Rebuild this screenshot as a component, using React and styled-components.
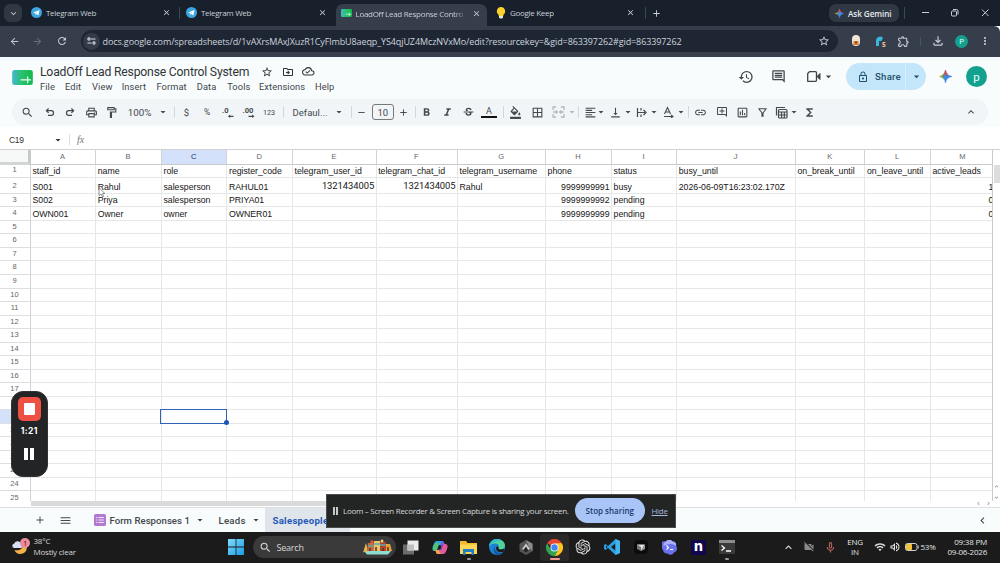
import styled, { createGlobalStyle } from "styled-components";
import {
  MdStarBorder, MdOutlineDriveFileMove, MdOutlineCloudDone, MdHistory, MdOutlineComment,
  MdLockOutline, MdArrowDropDown, MdSearch, MdOutlinePrint,
  MdOutlineFormatPaint, MdFormatBold, MdFormatItalic, MdStrikethroughS, MdFormatColorFill,
  MdBorderAll, MdFormatAlignLeft, MdVerticalAlignBottom, MdLink, MdOutlineAddComment,
  MdOutlineInsertChart, MdOutlineFilterAlt, MdFunctions, MdKeyboardArrowUp, MdKeyboardArrowLeft,
  MdKeyboardArrowDown, MdAdd, MdRemove, MdMenu, MdArrowBack, MdArrowForward, MdRefresh, MdClose,
  MdOutlineExtension, MdOutlineFileDownload, MdMoreVert, MdVideocamOff, MdOutlineMicNone,
  MdWifi, MdOutlineVolumeUp,
} from "react-icons/md";
import { RiOpenaiFill } from "react-icons/ri";

const GlobalStyle = createGlobalStyle`
  * { box-sizing: border-box; }
  body { margin: 0; overflow: hidden; }
  svg { display: block; flex: none; }
`;

const ui = `"Open Sans", "Noto Sans", sans-serif`;
const google = `Roboto, "Noto Sans", sans-serif`;

const Screen = styled.div`
  width: 1000px;
  height: 563px;
  display: flex;
  flex-direction: column;
  position: relative;
  overflow: hidden;
  white-space: nowrap;
  background: #fff;
`;

/* ---------- browser ---------- */

const TabStrip = styled.div`
  flex: none;
  height: 26px;
  background: #17202b;
  display: flex;
  align-items: center;
  padding-left: 4px;
  color: #c9cfd7;
  font: 8px ${ui};
  letter-spacing: -0.3px;
`;
const TabSearch = styled.div`
  width: 18px;
  height: 18px;
  border-radius: 6px;
  background: #303844;
  display: flex;
  align-items: center;
  justify-content: center;
`;
const Tab = styled.div`
  width: ${({ $w }) => $w}px;
  height: ${({ $active }) => ($active ? 22 : 20)}px;
  align-self: ${({ $active }) => ($active ? "flex-end" : "center")};
  display: flex;
  align-items: center;
  padding: 0 6px ${({ $active }) => ($active ? 4 : 1)}px ${({ $active }) => ($active ? 5 : 8)}px;
  gap: 4px;
  margin-left: ${({ $ml }) => $ml || 0}px;
  background: ${({ $active }) => ($active ? "#363e4b" : "transparent")};
  border-radius: 7px 7px 0 0;
`;
const TabTitle = styled.span`
  flex: 1;
  ${({ $fade }) => $fade && "-webkit-mask-image: linear-gradient(90deg, #000 88%, transparent);"}
`;
const Separator = styled.span`
  flex: none;
  width: 1px;
  height: ${({ $h }) => $h || 12}px;
  margin-left: ${({ $ml }) => $ml || 0}px;
  background: ${({ $color }) => $color || "#3d4653"};
`;
const Gemini = styled.div`
  margin-left: auto;
  width: 70px;
  height: 18px;
  border-radius: 7px;
  background: #303843;
  display: flex;
  align-items: center;
  padding-left: 6px;
  gap: 4px;
  color: #e6e9ee;
  font-weight: 600;
  font-size: 8.2px;
  letter-spacing: -0.1px;
`;
const AddressRow = styled.div`
  flex: none;
  height: 31px;
  background: #363e4b;
  border-top-right-radius: 6px;
  display: flex;
  align-items: center;
  padding-left: 8px;
  padding-bottom: 1px;
  color: #c6ccd5;
`;
const Omnibox = styled.div`
  width: 757px;
  height: 22px;
  margin-left: 13px;
  border-radius: 11px;
  background: #1e2633;
  display: flex;
  align-items: center;
  padding: 0 8px 0 2px;
  font: 9px ${ui};
  letter-spacing: -0.106px;
  color: #ccd3dc;
`;
const SiteInfo = styled.span`
  width: 17px;
  height: 17px;
  border-radius: 50%;
  background: #343c49;
  display: flex;
  align-items: center;
  justify-content: center;
  margin-right: 3px;
`;
const Url = styled.span`
  flex: 1;
`;
const Avatar = styled.span`
  flex: none;
  width: ${({ $size }) => $size}px;
  height: ${({ $size }) => $size}px;
  margin-left: ${({ $ml }) => $ml}px;
  border-radius: 50%;
  background: #13a18f;
  color: #e8fffb;
  display: flex;
  align-items: center;
  justify-content: center;
  font: ${({ $font }) => $font}px ${google};
`;

/* ---------- sheets header ---------- */

const Header = styled.div`
  flex: none;
  height: 41px;
  background: linear-gradient(#eff8fd 0, #f9fcfc 5px);
  display: flex;
  padding-left: 12px;
  font-family: ${google};
  color: #40464b;
`;
const TitleBlock = styled.div`
  margin-left: 7px;
  padding-top: 6px;
`;
const TitleRow = styled.div`
  display: flex;
  align-items: center;
  height: 17px;
  font-size: 12.2px;
  letter-spacing: -0.19px;
  color: #303438;
`;
const TitleText = styled.span`
  width: 221px;
`;
const MenuRow = styled.div`
  display: flex;
  height: 13px;
  align-items: center;
  font-size: 9.3px;
  letter-spacing: 0.1px;
`;
const MenuItem = styled.span`
  width: ${({ $w }) => $w}px;
`;
const HeaderActions = styled.div`
  margin-left: auto;
  display: flex;
  align-items: center;
  height: 39px;
  padding-right: 13px;
  color: #3f4549;
`;
const ShareButton = styled.div`
  width: 80px;
  height: 27px;
  border-radius: 14px;
  background: #c3e6fa;
  display: flex;
  align-items: center;
  padding-left: 11px;
  margin-left: 13px;
  color: #23506b;
  font-size: 9.6px;
  font-weight: 500;
  letter-spacing: 0.25px;
`;
const ShareText = styled.span`
  width: 30px;
  margin-left: 6px;
`;
const ShareSplit = styled.span`
  width: 21px;
  height: 27px;
  border-left: 1px solid #d9effb;
  display: flex;
  align-items: center;
  justify-content: center;
`;

const ToolbarWrap = styled.div`
  flex: none;
  height: 29px;
  background: #f9fcfc;
  padding: 1px 12px 0;
`;
const Toolbar = styled.div`
  height: 26px;
  border-radius: 13px;
  background: #f1f5f7;
  display: flex;
  align-items: center;
  color: #45494d;
  font: 9.5px ${google};
`;
const Tool = styled.span`
  flex: none;
  width: ${({ $w }) => $w || 16}px;
  margin-left: ${({ $ml }) => $ml || 0}px;
  display: flex;
  align-items: center;
  justify-content: center;
  opacity: ${({ $dim }) => ($dim ? 0.35 : 1)};
  font-size: ${({ $fs }) => $fs || 9.5}px;
`;
const FontSizeBox = styled.span`
  width: 21.5px;
  height: 16px;
  margin-left: 5px;
  border: 1px solid #75797c;
  border-radius: 3px;
  display: flex;
  align-items: center;
  justify-content: center;
`;
const ColorTool = styled(Tool)`
  flex-direction: column;
  font-size: 9px;
  line-height: 9px;
  padding-top: 1px;
  border-bottom: 2.5px solid #111;
`;
const FormulaBar = styled.div`
  flex: none;
  height: 21.5px;
  display: flex;
  align-items: center;
  padding: 4px 0 0 9px;
  font: 8.5px "Liberation Sans", Arial, sans-serif;
  color: #333;
`;
const NameBox = styled.span`
  width: 44px;
  letter-spacing: -0.35px;
`;
const Fx = styled.i`
  margin-left: 7px;
  font: italic 10px "Liberation Serif", serif;
  color: #777;
`;

/* ---------- grid ---------- */

const GridArea = styled.div`
  flex: none;
  height: 352.3px;
  display: flex;
  overflow: hidden;
`;
const Grid = styled.div`
  width: 993px;
  overflow: hidden;
  border-right: 1px solid #c9cbcc;
  display: grid;
  grid-template-columns: 31px 65.2px 65.8px 65.5px 65.6px 83.6px 81.4px 88px 66px 65.2px 118.7px 69.5px 65.5px 65px;
  grid-template-rows: 16.2px 13.3px 15.8px repeat(23, 13.54px);
  align-content: start;
  font: 8.75px "Liberation Sans", Arial, sans-serif;
  letter-spacing: -0.02px;
  color: #161616;
`;
const Corner = styled.div`
  background: #f7f8f8;
  border-top: 1px solid #d0d2d3;
  border-right: 3px solid #c6c8c9;
  border-bottom: 3px solid #d2d4d5;
`;
const ColumnHead = styled.div`
  border-top: 1px solid #d0d2d3;
  border-right: 1px solid #d0d2d3;
  border-bottom: 1px solid #c8cacb;
  display: flex;
  align-items: center;
  justify-content: center;
  padding-right: 1px;
  font-size: 7.5px;
  color: ${({ $on }) => ($on ? "#10306b" : "#666")};
  background: ${({ $on }) => ($on ? "#d3e1fb" : "#fff")};
`;
const RowHead = styled.div`
  border-right: 1px solid #d0d2d3;
  border-bottom: 1px solid #dcdedf;
  display: flex;
  align-items: flex-end;
  justify-content: center;
  padding: 0 1px 2.5px 0;
  line-height: 9px;
  font-size: 7.5px;
  color: #666;
  background: ${({ $on }) => ($on ? "#d3e1fb" : "#fff")};
`;
const Cell = styled.div`
  min-width: 0;
  position: relative;
  z-index: ${({ $on }) => ($on ? 1 : 0)};
  border-right: 1px solid #e6e8e8;
  border-bottom: 1px solid #e6e8e8;
  display: flex;
  align-items: flex-end;
  justify-content: ${({ $right }) => ($right ? "flex-end" : "flex-start")};
  padding: 0 1.5px 0.9px 1.5px;
  line-height: 10px;
  ${({ $big }) => $big && `font: 9.4px/13px ${google}; letter-spacing: -0.04px; padding-bottom: 0.5px;`}
`;
const Selection = styled.div`
  position: absolute;
  inset: -1px -1px -1px -1.5px;
  border: 1px solid #2d62b5;

  &::after {
    content: "";
    position: absolute;
    right: -3px;
    bottom: -2.5px;
    width: 5px;
    height: 5px;
    border-radius: 50%;
    background: #1c56b3;
  }
`;
const VScroll = styled.div`
  flex: 1;
  display: flex;
  flex-direction: column;
  align-items: center;
  justify-content: space-between;
  padding: 15.5px 0 0;
  border-top: 1px solid #d0d2d3;
  color: #888;
`;
const VThumb = styled.div`
  width: 6px;
  height: 18px;
  background: #dcdddd;
`;
const ScrollArrows = styled.div`
  display: flex;
  flex-direction: ${({ $row }) => ($row ? "row" : "column")};
  gap: 3.5px;
`;
const HScroll = styled.div`
  flex: none;
  height: 7.2px;
  border-bottom: 1px solid #dcdedf;
  display: flex;
  align-items: center;
  justify-content: space-between;
  padding: 0 8px 0 31px;
  color: #888;
`;
const HThumb = styled.div`
  width: 590px;
  height: 5px;
  background: #d9dbdb;
`;

const SheetTabs = styled.div`
  flex: none;
  height: 24px;
  background: #f9fcfc;
  display: flex;
  align-items: center;
  padding: 1px 11px 0 33px;
  font: 500 9.6px ${google};
  color: #42474b;
`;
const SheetTab = styled.span`
  width: ${({ $w }) => $w}px;
  margin-left: ${({ $ml }) => $ml}px;
  letter-spacing: ${({ $ls }) => $ls}px;
`;
const ActiveSheet = styled.span`
  width: 85px;
  height: 24px;
  margin: -1px 0 0 4.5px;
  padding: 1px 0 0 7.5px;
  background: #dfe5ea;
  color: #2558b8;
  font-weight: 700;
  letter-spacing: 0.28px;
  display: flex;
  align-items: center;
`;

/* ---------- taskbar ---------- */

const Taskbar = styled.div`
  flex: none;
  height: 31px;
  background: #1b1b1b;
  display: flex;
  align-items: center;
  padding-left: 12px;
  font: 8px ${ui};
  letter-spacing: -0.22px;
  color: #e4e4e4;
`;
const Weather = styled.div`
  width: 194.5px;
  margin-left: 3.5px;
  line-height: 10.5px;
  color: #d6d6d6;
  padding-bottom: 1px;
`;
const SearchPill = styled.div`
  width: 143px;
  height: 22px;
  border-radius: 11px;
  background: #3a3a3a;
  margin: 0 0 0 8.5px;
  display: flex;
  align-items: center;
  padding: 0 3px 0 6px;
  font-size: 9px;
  color: #d5d5d5;
`;
const SearchText = styled.span`
  flex: 1;
  margin-left: 5px;
`;
const TaskApp = styled.span`
  flex: none;
  width: 28.7px;
  height: 27px;
  display: flex;
  align-items: center;
  justify-content: center;
  position: relative;
  border-radius: 3px;
  background: ${({ $on }) => ($on ? "#2a2828" : "transparent")};

  &::after {
    content: "";
    display: ${({ $mark }) => ($mark ? "block" : "none")};
    position: absolute;
    bottom: 1px;
    width: ${({ $on }) => ($on ? 10 : 4)}px;
    height: 2px;
    border-radius: 1px;
    background: ${({ $on }) => ($on ? "#f0988c" : "#9a9a9a")};
  }
`;
const NLogo = styled.span`
  width: 15px;
  height: 15px;
  background: #12064f;
  color: #fff;
  font: 800 14px/12px Inter, sans-serif;
  text-align: center;
`;
const Tray = styled.div`
  margin-left: auto;
  display: flex;
  align-items: center;
  padding-right: 13px;
`;
const TrayText = styled.span`
  width: ${({ $w }) => $w}px;
  margin-left: ${({ $ml }) => $ml || 0}px;
  text-align: ${({ $align }) => $align || "center"};
  line-height: 10.5px;
`;

/* ---------- overlays ---------- */

const Recorder = styled.div`
  position: absolute;
  left: 10.5px;
  top: 391px;
  width: 37.5px;
  height: 86px;
  border-radius: 12px;
  background: #232425;
  border: 1px solid #333;
  display: flex;
  flex-direction: column;
  align-items: center;
  padding-top: 5px;
  color: #fff;
  font: 700 8.5px/10px Inter, sans-serif;
  letter-spacing: 0.4px;
`;
const StopSquare = styled.div`
  width: 23.5px;
  height: 23.5px;
  border-radius: 5px;
  background: #ee5144;
  display: flex;
  align-items: center;
  justify-content: center;

  &::after {
    content: "";
    width: 11.5px;
    height: 12px;
    border-radius: 1px;
    background: #fff;
  }
`;
const Elapsed = styled.span`
  margin: 5px 0 12.5px;
`;
const Bars = styled.span`
  width: ${({ $w }) => $w}px;
  height: ${({ $h }) => $h}px;
  border: solid ${({ $color }) => $color || "#fff"};
  border-width: 0 ${({ $bar }) => $bar}px;
`;
const ShareNotice = styled.div`
  position: absolute;
  left: 326px;
  top: 494px;
  width: 350px;
  height: 33.5px;
  background: #232525;
  border: 1px solid #4a4c4c;
  display: flex;
  align-items: center;
  padding-left: 6px;
  color: #d6d9d9;
  font: 8px ${ui};
  letter-spacing: -0.29px;
`;
const NoticeText = styled.span`
  width: 232px;
  margin-left: 5px;
`;
const StopSharing = styled.span`
  width: 69.5px;
  height: 25px;
  border-radius: 13px;
  background: #a9c5f8;
  color: #17386e;
  font-weight: 600;
  letter-spacing: 0;
  display: flex;
  align-items: center;
  justify-content: center;
`;
const Hide = styled.span`
  margin-left: 7px;
  color: #a3b8dc;
  text-decoration: underline;
`;
const Pointer = styled.svg`
  position: absolute;
  left: 98px;
  top: 187px;
`;

/* ---------- drawings ---------- */

const Telegram = () => (
  <svg width="11" height="11" viewBox="0 0 22 22">
    <circle cx="11" cy="11" r="11" fill="#3da5e0" />
    <path d="M4.5 10.8 17 5.8l-2.2 11-3.9-2.9-2 1.9-.4-3.2z" fill="#fff" />
    <path d="m8.6 12.6 5.6-4.1-4.2 5z" fill="#a9d2ee" />
  </svg>
);

const SheetLogo = ({ w, h }) => (
  <svg width={w} height={h} viewBox="0 0 44 32">
    <defs>
      <linearGradient id="sheet">
        <stop offset="0" stopColor="#43b7cf" />
        <stop offset=".5" stopColor="#27c268" />
        <stop offset="1" stopColor="#14b84f" />
      </linearGradient>
    </defs>
    <rect width="44" height="32" rx="5" fill="url(#sheet)" />
    <path d="M18 21h22M33 14v14" stroke="#eafff2" strokeWidth="2.6" />
  </svg>
);

const Bulb = () => (
  <svg width="10" height="12" viewBox="0 0 10 12">
    <path d="M5 0a4.2 4.2 0 0 0-2.4 7.6V9h4.8V7.6A4.2 4.2 0 0 0 5 0z" fill="#fbd22d" />
    <path d="M3 9h4v1.5L6 11.5H4l-1-1z" fill="#e8e3cf" />
  </svg>
);

const Spark = ({ size }) => (
  <svg width={size} height={size} viewBox="0 0 24 24">
    <defs>
      <linearGradient id="sp1" x1="0" y1=".5" x2="1" y2=".5">
        <stop offset="0" stopColor="#f4b92c" />
        <stop offset=".32" stopColor="#42a565" />
        <stop offset=".5" stopColor="#4285f4" />
        <stop offset="1" stopColor="#3a7df0" />
      </linearGradient>
      <linearGradient id="sp2" x1="0" y1="0" x2="0" y2="1">
        <stop offset="0" stopColor="#ea4335" />
        <stop offset=".2" stopColor="#ea4335" />
        <stop offset=".5" stopColor="#ea4335" stopOpacity="0" />
      </linearGradient>
    </defs>
    <path d="M12 0c1 7 5 11 12 12-7 1-11 5-12 12-1-7-5-11-12-12C7 11 11 7 12 0z" fill="url(#sp1)" stroke="url(#sp1)" />
    <path d="M12 0c1 7 5 11 12 12-7 1-11 5-12 12-1-7-5-11-12-12C7 11 11 7 12 0z" fill="url(#sp2)" stroke="url(#sp2)" />
  </svg>
);

const WindowButtons = () => (
  <svg width="70" height="10" viewBox="0 0 70 10" fill="none" stroke="#c9cfd7" strokeWidth="1">
    <path d="M1 4.5h7M61 1.5l6.5 6.5M67.5 1.5 61 8" />
    <rect x="30.5" y="3" width="5" height="5" rx="1" />
    <path d="M32 1.5h3.5a1.5 1.5 0 0 1 1.5 1.5v3.5" />
  </svg>
);

const Tune = () => (
  <svg width="9" height="8" viewBox="0 0 18 16" fill="none" stroke="#d5dbe3" strokeWidth="2.2">
    <path d="M8 4h9M1 12h8" />
    <circle cx="4" cy="4" r="2.2" />
    <circle cx="14" cy="12" r="2.2" />
  </svg>
);

const Turn = ({ flip }) => (
  <svg width="10" height="10" viewBox="0 0 10 10" fill="none" stroke="#45494d" strokeWidth="1.2">
    <path
      d="M3.600 1.500 1.400 3.700l2.200 2.200M1.600 3.700h4.600a2.300 2.300 0 0 1 0 4.700H3"
      transform={flip ? "matrix(-1 0 0 1 10 0)" : undefined}
    />
  </svg>
);

const Camera = () => (
  <svg width="15" height="13" viewBox="0 0 15 13">
    <path d="M3.500 1.700h6a1 1 0 0 1 1 1v7.600a1 1 0 0 1-1 1H1.700V3.500z" fill="none" stroke="#3f4549" strokeWidth="1.300" strokeLinejoin="round" />
    <path d="M11 6.500 14 3.500v6z" fill="#3f4549" stroke="#3f4549" />
  </svg>
);

const Decimal = ({ zeros, back }) => (
  <svg width="14" height="13" viewBox="0 0 14 13" fill="#45494d">
    <text x={back ? 0.5 : 1} y="7.2" fontSize="7.6" fontWeight="700" fontFamily="Roboto, sans-serif">{zeros}</text>
    <path d={back ? "M6.500 9.700h3.700V8.500l2.300 1.800-2.300 1.800v-1.200H6.500z" : "M12.500 9.700H9.200V8.500L6.900 10.300l2.300 1.800v-1.200h3.300z"} />
  </svg>
);

const Merge = () => (
  <svg width="13" height="12" viewBox="0 0 13 12" fill="none" stroke="#45494d" strokeWidth="1.3">
    <path d="M4 1H1v3M9 1h3v3M4 11H1V8M9 11h3V8M1 6h4M12 6H8M3.8 4.5 5.3 6 3.8 7.5M9.2 4.5 7.7 6l1.5 1.5" />
  </svg>
);

const Wrap = () => (
  <svg width="12" height="11" viewBox="0 0 12 11" fill="none" stroke="#45494d" strokeWidth="1.2">
    <path d="M1.5 1v9M5 1v2.5M5 7.5V10M2 5.5h7M7.5 3l2.6 2.5L7.5 8" />
  </svg>
);

const Rotate = () => (
  <svg width="12" height="12" viewBox="0 0 12 12" fill="none" stroke="#45494d" strokeWidth="1.1">
    <path d="M1.5 8 4.5 1.5 7.5 8M2.6 6h3.8M1 10.5h8.500M8 8.800l2 1.700-2 1.500" />
  </svg>
);

const TableTool = () => (
  <svg width="13" height="13" viewBox="0 0 13 13" fill="none" stroke="#45494d" strokeWidth="1.2">
    <path d="M1.5 9.5v-8h8.5" />
    <rect x="3.5" y="3.5" width="8.5" height="8.5" rx="1" />
    <path d="M3.5 6h8.5M3.5 9h8.5M6.5 6v6M9.3 6v6" />
  </svg>
);

const FormIcon = () => (
  <svg width="12" height="12" viewBox="0 0 12 12">
    <rect width="12" height="12" rx="1.5" fill="#b27ad3" />
    <path d="M2.2 3.5h1.2M2.2 6h1.2M2.2 8.5h1.2M4.5 3.5h5.3M4.5 6h5.3M4.5 8.5h5.3" stroke="#f5e6fb" strokeWidth="1.2" />
  </svg>
);

const WeatherIcon = () => (
  <svg width="18" height="18" viewBox="0 0 18 18">
    <path d="M12 3c5 4 3.500 13-3.500 13-3.500 0-5.500-2-6-4 5 1.500 10-2 9.500-9z" fill="#f3b146" />
    <path d="M2 10a2.300 2.300 0 0 1 .3-4.500A3.500 3.500 0 0 1 9 6a2 2 0 0 1 0 4z" fill="#d5e0f4" />
    <circle cx="13" cy="5" r="5" fill="#f08c9c" />
    <text x="13" y="7.8" textAnchor="middle" fontSize="7.5" fontFamily="Open Sans, sans-serif" fill="#3a1a20">1</text>
  </svg>
);

const Windows = () => (
  <svg width="16" height="16" viewBox="0 0 16 16">
    <defs>
      <linearGradient id="win" x1="0" y1="0" x2="1" y2="1">
        <stop offset="0" stopColor="#7fdcfb" />
        <stop offset="1" stopColor="#1c9ce6" />
      </linearGradient>
    </defs>
    <path d="M0 0h7.600v7.600H0zM8.400 0H16v7.600H8.400zM0 8.400h7.600V16H0zM8.400 8.400H16V16H8.400z" fill="url(#win)" />
  </svg>
);

const Market = () => (
  <svg width="31" height="18" viewBox="0 0 31 18">
    <path d="M2 13h27l-3 3.500H5z" fill="#8fdcd0" />
    <path d="M1 14.500 4 5l2 8z" fill="#e8b44c" />
    <path d="M6 5h6v8H5z" fill="#c9683f" />
    <path d="M12 3h6v10h-6z" fill="#e6c46e" />
    <path d="M18 4h6v9h-6z" fill="#b5442f" />
    <path d="M24 6h4l2 7h-6z" fill="#e3a23c" />
    <path d="M6 8h6M18 7h6M12 6h6" stroke="#57a9a8" strokeWidth="1.5" />
    <path d="M8 13v-3M14 13v-4M21 13v-3M26 13v-4" stroke="#5d2f22" strokeWidth="1.5" />
    <circle cx="10" cy="4" r="1.7" fill="#e05b3a" />
    <circle cx="20" cy="3" r="1.5" fill="#f0d27a" />
  </svg>
);

const TaskView = () => (
  <svg width="16" height="15" viewBox="0 0 16 15">
    <rect x="0" y="4.5" width="11" height="10" fill="#6c6c6c" />
    <rect x="4.5" y="0.5" width="11" height="10" fill="#ececec" />
    <rect x="4.5" y="4.5" width="6.5" height="6" fill="#bdbdbd" />
  </svg>
);

const Copilot = () => (
  <svg width="16" height="15" viewBox="0 0 16 15">
    <path d="M5 1h5c2 0 2 2 2.500 4H7L4.500 11H3C0 11 0 8.500 1 6s1.500-5 4-5z" fill="#2f9fe0" />
    <path d="M3 11c2 0 2-2 3-5 .6-2 1-3 3-3H5C3 3 1 6 1 8s0 3 2 3z" fill="#58c46a" />
    <path d="M11 14H6c-2 0-2-2-2.500-4H9l2.500-6H13c3 0 3 2.500 2 5s-1.500 5-4 5z" fill="#e25a98" />
    <path d="M10 1c2 0 2 3 3 3-2 0-2.500 2-3.200 4L9 10H6l2-5z" fill="#7d57dc" />
    <path d="M6 14c-2 0-2-2-2.500-4H7c0 2 1 4 3 4z" fill="#f2a64a" />
    <path d="M7 5.500h2.500L8.500 9.500H6z" fill="#1b1b1b" />
  </svg>
);

const Explorer = () => (
  <svg width="17" height="15" viewBox="0 0 17 15">
    <path d="M0 1h6l1.500 2H17v11H0z" fill="#f5b92f" />
    <path d="M0 4.500h17V14H0z" fill="#fcd656" />
    <path d="M3 9h11v6h-2.500v-3h-6v3H3z" fill="#1e7fc4" />
  </svg>
);

const Edge = () => (
  <svg width="16" height="16" viewBox="0 0 16 16">
    <circle cx="8" cy="8" r="8" fill="#1d82d2" />
    <path d="M0 7.500C.5 3 4 0 8 0c4.500 0 8 3 8 6.500C16 9 14 10.500 12 10.500c-2 0-3-.8-2.300-2C10.500 6 8.500 4.500 6 4.500c-2.500 0-5 1-6 3z" fill="#4fd39a" />
    <path d="M0 7.500C.5 3 4 0 8 0c2 0 3 .5 4 1.500C8 1 3 3 0 7.500z" fill="#2fb8d8" />
    <path d="M6.200 7c-1.500 3 1 7 5 7 1.500 0 2.500-.3 3.300-1C13 15 11 16 8 16 4.500 14.500 3.500 9.500 6.200 7z" fill="#125a9e" />
    <path d="M9.700 8.500c-.7 1.200.3 2 2.300 2 1 0 2-.3 2.800-1l.2 3c-3 1.500-8 .5-8-3 0-1 .6-2 1.500-2.200z" fill="#1b1b1b" />
  </svg>
);

const HexApp = () => (
  <svg width="14" height="15" viewBox="0 0 14 15">
    <path d="m7 0 6.500 3.800v7.400L7 15 .5 11.200V3.800z" fill="#555" />
    <path d="m7 0 6.500 3.800v7.400L10 7z" fill="#8b8b8b" />
    <path d="M7 3.500 11 9 7 11 3 9z" fill="#cfcfcf" />
    <path d="M7 6.500 9.500 10.500 7 12.500l-3-2z" fill="#262626" />
  </svg>
);

const Chrome = () => (
  <svg width="17" height="17" viewBox="0 0 48 48">
    <path d="M24 24 3.200 12A24 24 0 0 1 44.800 12z" fill="#e84436" />
    <path d="M24 12h20.800A24 24 0 0 1 24 48l10.400-18z" fill="#fbc51d" />
    <path d="M13.600 30 3.200 12A24 24 0 0 0 24 48l10.400-18z" fill="#2fa553" />
    <circle cx="24" cy="24" r="11.5" fill="#fff" />
    <circle cx="24" cy="24" r="9" fill="#4285f4" />
  </svg>
);

const VsCode = () => (
  <svg width="16" height="16" viewBox="0 0 32 32">
    <path d="M23 0 8 14 3 10 0 12v8l3 2 5-4 15 14 9-4V4zM4 19v-6l3 3zm19 4-9-7 9-7z" fill="#2a9bdc" fillRule="evenodd" />
    <path d="m23 0 9 4v24l-9 4z" fill="#3fb4f2" />
  </svg>
);

const Cube = () => (
  <svg width="14" height="14" viewBox="0 0 14 14">
    <rect width="14" height="14" rx="4" fill="#0c0c0c" />
    <path d="M3 4.500h8L7 11z" fill="#e4e4e4" />
    <path d="M3 4.500v4.500l4 2V7z" fill="#777" />
    <path d="M11 4.500V9l-4 2z" fill="#9c9c9c" />
  </svg>
);

const Cloudy = () => (
  <svg width="15" height="15" viewBox="0 0 15 15">
    <path d="M4 1.500a4 4 0 0 1 6.500 0 3.500 3.500 0 0 1 3.500 4.500 4 4 0 0 1-2 6.500 4 4 0 0 1-6.500 1A3.800 3.800 0 0 1 1 9.500 4 4 0 0 1 4 1.500z" fill="#6b72f0" />
    <path d="M4 1.500a4 4 0 0 1 6.500 0 3.500 3.500 0 0 1 3.500 4.500C10 3 6 4 1.500 6 1.500 4 2 2 4 1.500z" fill="#a9aef9" />
    <path d="m4.500 5.500 2 2-2 2M8 9.500h3" stroke="#fff" strokeWidth="1.2" fill="none" />
  </svg>
);

const Terminal = () => (
  <svg width="16" height="14" viewBox="0 0 16 14">
    <rect width="16" height="14" rx="1" fill="#3a3a3a" />
    <rect width="16" height="3" fill="#8d8d8d" />
    <path d="M2.500 5.500 5.500 8l-3 2.500M7 11h5" stroke="#fff" strokeWidth="1.3" fill="none" />
  </svg>
);

const Battery = () => (
  <svg width="14" height="8" viewBox="0 0 14 8">
    <rect x=".5" y=".5" width="11.5" height="7" rx="2" fill="none" stroke="#cfcfcf" />
    <rect x="1" y="1" width="6" height="6" rx="1" fill="#f0c23c" />
    <path d="M13.200 2.500v3" stroke="#cfcfcf" />
  </svg>
);

const menus = [
  ["File", 25], ["Edit", 27], ["View", 29.7], ["Insert", 34.7], ["Format", 40.4],
  ["Data", 30.4], ["Tools", 31.8], ["Extensions", 56], ["Help", 20],
];

const letters = "ABCDEFGHIJKLM".split("");

const data = {
  1: ["staff_id", "name", "role", "register_code", "telegram_user_id", "telegram_chat_id",
    "telegram_username", "phone", "status", "busy_until", "on_break_until", "on_leave_until", "active_leads"],
  2: ["S001", "Rahul", "salesperson", "RAHUL01", "1321434005", "1321434005", "Rahul",
    "9999999991", "busy", "2026-06-09T16:23:02.170Z", "", "", "1"],
  3: ["S002", "Priya", "salesperson", "PRIYA01", "", "", "", "9999999992", "pending", "", "", "", "0"],
  4: ["OWN001", "Owner", "owner", "OWNER01", "", "", "", "9999999999", "pending", "", "", "", "0"],
};

const rows = Array.from({ length: 25 }, (_, i) => i + 1);

const isNumber = (value) => /^\d+$/.test(value);

const Browser = () => (
  <>
    <TabStrip>
      <TabSearch><MdKeyboardArrowDown size={11} /></TabSearch>
      <Tab $w={154} $ml={1}><Telegram /><TabTitle>Telegram Web</TabTitle><MdClose size={9} /></Tab>
      <Separator $ml={2} />
      <Tab $w={154.5} $ml={-2}><Telegram /><TabTitle>Telegram Web</TabTitle><MdClose size={9} /></Tab>
      <Tab $w={151} $ml={3} $active>
        <SheetLogo w={11} h={8} />
        <TabTitle $fade>LoadOff Lead Response Contro</TabTitle>
        <MdClose size={9} />
      </Tab>
      <Tab $w={153} $ml={1.5}><Bulb /><TabTitle>Google Keep</TabTitle><MdClose size={9} /></Tab>
      <Separator $ml={4} />
      <Tool $w={12} $ml={4}><MdAdd size={11} /></Tool>
      <Gemini><Spark size={9} />Ask Gemini</Gemini>
      <Separator $ml={5} />
      <Tool $w={70} $ml={16}><WindowButtons /></Tool>
      <Tool $w={9} />
    </TabStrip>
    <AddressRow>
      <Tool $w={12} $ml={0.5}><MdArrowBack size={11} /></Tool>
      <Tool $w={12} $ml={11} $dim><MdArrowForward size={11} /></Tool>
      <Tool $w={12} $ml={12}><MdRefresh size={12} /></Tool>
      <Omnibox>
        <SiteInfo><Tune /></SiteInfo>
        <Url>docs.google.com/spreadsheets/d/1vAXrsMAxJXuzR1CyFlmbU8aeqp_YS4qjUZ4MczNVxMo/edit?resourcekey=&gid=863397262#gid=863397262</Url>
        <MdStarBorder size={12} />
      </Omnibox>
      <Tool $ml={10.5}>
        <svg width="8" height="12" viewBox="0 0 8 12">
          <rect width="8" height="11" rx="4" fill="#f2e4d5" />
          <path d="M1.5 6h5v4h-5z" fill="#d97b35" />
          <circle cx="4" cy="7.5" r="1" fill="#7c3c14" />
        </svg>
      </Tool>
      <Tool $ml={8}>
        <svg width="13" height="13" viewBox="0 0 13 13">
          <path d="M2 11V5a4 4 0 0 1 7-2l-1.500 3H5v5z" fill="#38b6dc" />
          <text x="8" y="12" fontSize="6.5" fontWeight="700" fontFamily="Open Sans, sans-serif" fill="#f3c8a0">5</text>
        </svg>
      </Tool>
      <Tool $ml={7.5}><MdOutlineExtension size={13} /></Tool>
      <Separator $ml={8.5} $h={9} $color="#4a5361" />
      <Tool $ml={9}><MdOutlineFileDownload size={14} /></Tool>
      <Avatar $size={13} $ml={9} $font={7.5}>P</Avatar>
      <Tool $ml={8.5}><MdMoreVert size={12} /></Tool>
    </AddressRow>
  </>
);

const SheetsHeader = () => (
  <>
    <Header>
      <Tool $w={21}><SheetLogo w={21} h={15} /></Tool>
      <TitleBlock>
        <TitleRow>
          <TitleText>LoadOff Lead Response Control System</TitleText>
          <MdStarBorder size={12} />
          <Tool $w={12} $ml={9}><MdOutlineDriveFileMove size={12} /></Tool>
          <Tool $w={12} $ml={8.5}><MdOutlineCloudDone size={12.5} /></Tool>
        </TitleRow>
        <MenuRow>
          {menus.map(([label, w]) => <MenuItem key={label} $w={w}>{label}</MenuItem>)}
        </MenuRow>
      </TitleBlock>
      <HeaderActions>
        <Tool><MdHistory size={16} /></Tool>
        <Tool $ml={16}><MdOutlineComment size={15} /></Tool>
        <Tool $ml={19.5}><Camera /></Tool>
        <Tool $w={10} $ml={1.5}><MdArrowDropDown size={13} /></Tool>
        <ShareButton>
          <MdLockOutline size={12} />
          <ShareText>Share</ShareText>
          <ShareSplit><MdArrowDropDown size={13} /></ShareSplit>
        </ShareButton>
        <Tool $ml={11}><Spark size={13} /></Tool>
        <Avatar $size={21} $ml={13} $font={11.5}>p</Avatar>
      </HeaderActions>
    </Header>

    <ToolbarWrap>
      <Toolbar>
        <Tool $ml={7.5}><MdSearch size={13} /></Tool>
        <Tool $ml={6.5}><Turn /></Tool>
        <Tool $ml={4}><Turn flip /></Tool>
        <Tool $ml={5}><MdOutlinePrint size={13} /></Tool>
        <Tool $ml={4.5}><MdOutlineFormatPaint size={13} /></Tool>
        <Tool $w={25} $ml={7.5} $fs={9.8}>100%</Tool>
        <Tool $w={10} $ml={6}><MdArrowDropDown size={12} /></Tool>
        <Separator $ml={6} $color="#d3d7da" />
        <Tool $ml={3.5}>$</Tool>
        <Tool $ml={4.5} $fs={8.5}>%</Tool>
        <Tool $ml={5}><Decimal zeros=".0" /></Tool>
        <Tool $ml={4.5}><Decimal zeros=".00" back /></Tool>
        <Tool $ml={4.5} $fs={7.2}>123</Tool>
        <Separator $ml={6} $color="#d3d7da" />
        <Tool $w={35} $ml={8.5}>Defaul...</Tool>
        <Tool $w={10} $ml={6.5}><MdArrowDropDown size={12} /></Tool>
        <Separator $ml={7} $color="#d3d7da" />
        <Tool $w={12} $ml={3}><MdRemove size={11} /></Tool>
        <FontSizeBox>10</FontSizeBox>
        <Tool $w={12} $ml={3.5}><MdAdd size={11} /></Tool>
        <Separator $ml={5.5} $color="#d3d7da" />
        <Tool $ml={3}><MdFormatBold size={13} /></Tool>
        <Tool $ml={4.5}><MdFormatItalic size={13} /></Tool>
        <Tool $ml={5}><MdStrikethroughS size={13} /></Tool>
        <ColorTool $ml={5}>A</ColorTool>
        <Separator $ml={6} $color="#d3d7da" />
        <Tool $ml={3}><MdFormatColorFill size={13} /></Tool>
        <Tool $ml={6}><MdBorderAll size={13} /></Tool>
        <Tool $ml={5.5} $dim><Merge /></Tool>
        <Tool $w={10} $ml={0.5} $dim><MdArrowDropDown size={12} /></Tool>
        <Separator $ml={1} $color="#d3d7da" />
        <Tool $ml={3}><MdFormatAlignLeft size={13} /></Tool>
        <Tool $w={10} $ml={-2.5}><MdArrowDropDown size={12} /></Tool>
        <Tool $ml={2}><MdVerticalAlignBottom size={13} /></Tool>
        <Tool $w={10} $ml={-1}><MdArrowDropDown size={12} /></Tool>
        <Tool $ml={1.5}><Wrap /></Tool>
        <Tool $w={10} $ml={-1}><MdArrowDropDown size={12} /></Tool>
        <Tool $ml={2}><Rotate /></Tool>
        <Tool $w={10} $ml={-1}><MdArrowDropDown size={12} /></Tool>
        <Separator $ml={2} $color="#d3d7da" />
        <Tool $ml={3.5}><MdLink size={13} /></Tool>
        <Tool $ml={5}><MdOutlineAddComment size={12} /></Tool>
        <Tool $ml={4.5}><MdOutlineInsertChart size={13} /></Tool>
        <Tool $ml={4.5}><MdOutlineFilterAlt size={13} /></Tool>
        <Tool $ml={3}><TableTool /></Tool>
        <Tool $w={10} $ml={-1}><MdArrowDropDown size={12} /></Tool>
        <Tool $ml={2.5}><MdFunctions size={13} /></Tool>
        <Tool $ml={146}><MdKeyboardArrowUp size={12} /></Tool>
      </Toolbar>
    </ToolbarWrap>

    <FormulaBar>
      <NameBox>C19</NameBox>
      <Tool $w={10}><MdArrowDropDown size={12} /></Tool>
      <Separator $ml={6} $h={11} $color="#dcdedf" />
      <Fx>fx</Fx>
    </FormulaBar>
  </>
);

const Sheet = () => (
  <>
    <GridArea>
      <Grid>
        <Corner />
        {letters.map((l) => <ColumnHead key={l} $on={l === "C"}>{l}</ColumnHead>)}
        {rows.map((r) => [
          <RowHead key={r} $on={r === 19}>{r}</RowHead>,
          ...letters.map((l, i) => {
            const value = data[r]?.[i] || "";
            const selected = l === "C" && r === 19;
            return (
              <Cell key={l + r} $right={isNumber(value)} $big={isNumber(value) && (i === 4 || i === 5)} $on={selected}>
                {value}
                {selected && <Selection />}
              </Cell>
            );
          }),
        ])}
      </Grid>
      <VScroll>
        <VThumb />
        <ScrollArrows>
          <MdKeyboardArrowUp size={7} />
          <MdKeyboardArrowDown size={7} />
        </ScrollArrows>
      </VScroll>
    </GridArea>
    <HScroll>
      <HThumb />
      <ScrollArrows $row>
        <MdKeyboardArrowLeft size={7} />
        <MdKeyboardArrowLeft size={7} transform="rotate(180)" />
      </ScrollArrows>
    </HScroll>
    <SheetTabs>
      <Tool $w={14}><MdAdd size={12} /></Tool>
      <Tool $w={14} $ml={11.5}><MdMenu size={13} /></Tool>
      <Tool $w={12} $ml={21.5}><FormIcon /></Tool>
      <SheetTab $w={82} $ml={3.5} $ls={0.03}>Form Responses 1</SheetTab>
      <Tool $w={10} $ml={3.5}><MdArrowDropDown size={12} /></Tool>
      <SheetTab $w={28} $ml={13.5} $ls={0.25}>Leads</SheetTab>
      <Tool $w={10} $ml={4}><MdArrowDropDown size={12} /></Tool>
      <ActiveSheet>Salespeople</ActiveSheet>
      <Tool $w={14} $ml={625}><MdKeyboardArrowLeft size={13} /></Tool>
    </SheetTabs>
  </>
);

const Task = () => (
  <Taskbar>
    <WeatherIcon />
    <Weather>38°C<br />Mostly clear</Weather>
    <Windows />
    <SearchPill>
      <MdSearch size={13} />
      <SearchText>Search</SearchText>
      <Market />
    </SearchPill>
    <Tool $w={1.5} />
    <TaskApp><TaskView /></TaskApp>
    <TaskApp><Copilot /></TaskApp>
    <TaskApp $mark><Explorer /></TaskApp>
    <TaskApp><Edge /></TaskApp>
    <TaskApp><HexApp /></TaskApp>
    <TaskApp $mark $on><Chrome /></TaskApp>
    <TaskApp><RiOpenaiFill size={18} /></TaskApp>
    <TaskApp><VsCode /></TaskApp>
    <TaskApp><Cube /></TaskApp>
    <TaskApp><Cloudy /></TaskApp>
    <TaskApp><NLogo>n</NLogo></TaskApp>
    <TaskApp $mark><Terminal /></TaskApp>
    <Tray>
      <MdKeyboardArrowUp size={13} />
      <Tool $w={12} $ml={8}><MdVideocamOff size={12} color="#8a8a8a" /></Tool>
      <Tool $w={12} $ml={9}><MdOutlineMicNone size={13} color="#b5655b" /></Tool>
      <TrayText $w={18} $ml={10}>ENG<br />IN</TrayText>
      <Tool $w={12} $ml={9.5}><MdWifi size={12} /></Tool>
      <Tool $w={12} $ml={3}><MdOutlineVolumeUp size={12} /></Tool>
      <Tool $w={14} $ml={4.5}><Battery /></Tool>
      <TrayText $w={16} $ml={1}>53%</TrayText>
      <TrayText $w={50} $ml={1} $align="right">09:38 PM<br />09-06-2026</TrayText>
    </Tray>
  </Taskbar>
);

const App = () => {
  return (
    <Screen>
      <GlobalStyle />
      <Browser />
      <SheetsHeader />
      <Sheet />
      <Task />

      <Pointer width="8" height="11" viewBox="0 0 8 11">
        <path d="M1 .8v8l2-1.800 1.400 3 1.300-.6-1.400-2.900h2.600z" fill="#fff" stroke="#777" strokeWidth=".8" />
      </Pointer>
      <Recorder>
        <StopSquare />
        <Elapsed>1:21</Elapsed>
        <Bars $w={10} $h={12} $bar={4} />
      </Recorder>
      <ShareNotice>
        <Bars $w={5} $h={8} $bar={2} $color="#c6c9c9" />
        <NoticeText>Loom – Screen Recorder & Screen Capture is sharing your screen.</NoticeText>
        <StopSharing>Stop sharing</StopSharing>
        <Hide>Hide</Hide>
      </ShareNotice>
    </Screen>
  );
};

export default App;
